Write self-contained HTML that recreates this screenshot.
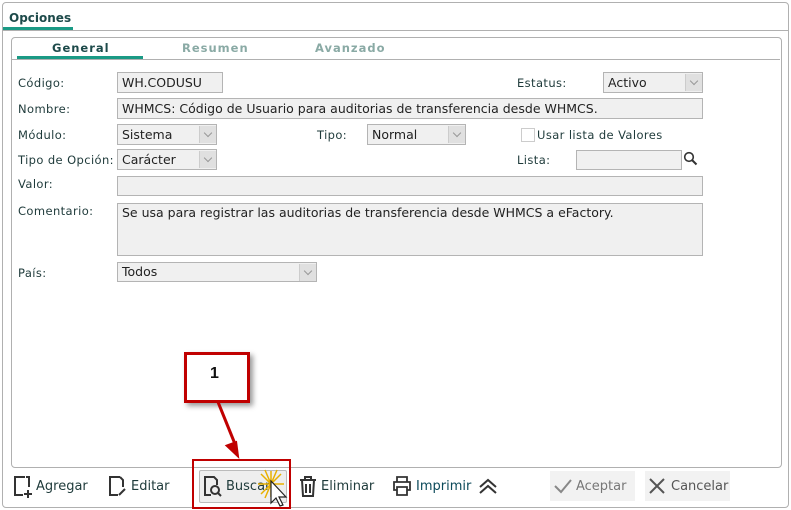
<!DOCTYPE html>
<html><head><meta charset="utf-8"><style>
body{margin:0;width:791px;height:510px;background:#fff;font-family:"DejaVu Sans","Liberation Sans",sans-serif;font-size:11.5px;color:#1e3a3a;position:relative;overflow:hidden}
.a{position:absolute}
.outer{left:2px;top:2px;width:785px;height:504px;border:1px solid #b0b0b0;border-radius:4px}
.inner{left:11px;top:37px;width:769px;height:429px;border:1px solid #b0b0b0;border-radius:4px}
.inp{position:absolute;background:#f0f0f0;border:1px solid #b4b4b4;box-sizing:border-box;font-size:12.5px;color:#222;padding-left:4px;line-height:19px;font-family:"DejaVu Sans","Liberation Sans",sans-serif}
.sel::after{content:"";position:absolute;right:0;top:1px;width:16px;height:17px;background:#e0e0e0;border-left:1px solid #ccc}
.sel::before{content:"";position:absolute;right:5px;top:5px;width:5px;height:5px;border-right:1px solid #999;border-bottom:1px solid #999;transform:rotate(45deg);z-index:2}
.lbl{position:absolute;font-size:11.5px;color:#1e3a3a;letter-spacing:0.4px}
.tb{position:absolute;top:479px;font-size:13px;color:#1e3a3a;font-family:"DejaVu Sans","Liberation Sans",sans-serif}
</style></head><body>
<div class="a outer"></div>
<div class="a" style="left:9px;top:11px;font-weight:bold;font-size:12px;color:#1d4a4a">Opciones</div>
<div class="a" style="left:3px;top:27px;width:70px;height:3px;background:#1a9a85"></div>
<div class="a" style="left:3px;top:30px;width:785px;height:1px;background:#b0b0b0"></div>
<div class="a inner"></div>
<div class="a" style="left:52px;top:41px;font-weight:bold;font-size:11.5px;color:#1d4a4a;letter-spacing:1px">General</div>
<div class="a" style="left:182px;top:41px;font-weight:bold;font-size:11.5px;color:#8aaaa5;letter-spacing:1px">Resumen</div>
<div class="a" style="left:315px;top:41px;font-weight:bold;font-size:11.5px;color:#8aaaa5;letter-spacing:1px">Avanzado</div>
<div class="a" style="left:17px;top:56px;width:126px;height:3px;background:#1a9a85"></div>
<div class="a" style="left:12px;top:59px;width:768px;height:1px;background:#b0b0b0"></div>

<div class="lbl" style="left:18px;top:76px">Código:</div>
<div class="inp" style="left:117px;top:72px;width:106px;height:21px">WH.CODUSU</div>
<div class="lbl" style="left:517px;top:76px">Estatus:</div>
<div class="inp sel" style="left:603px;top:72px;width:100px;height:21px">Activo</div>
<div class="lbl" style="left:18px;top:102px">Nombre:</div>
<div class="inp" style="left:117px;top:98px;width:586px;height:21px">WHMCS: Código de Usuario para auditorias de transferencia desde WHMCS.</div>
<div class="lbl" style="left:18px;top:128px">Módulo:</div>
<div class="inp sel" style="left:117px;top:124px;width:100px;height:21px">Sistema</div>
<div class="lbl" style="left:317px;top:128px">Tipo:</div>
<div class="inp sel" style="left:367px;top:124px;width:99px;height:21px">Normal</div>
<div class="a" style="left:521px;top:128px;width:12px;height:12px;border:1px solid #ccc"></div>
<div class="lbl" style="left:537px;top:128px">Usar lista de Valores</div>
<div class="lbl" style="left:18px;top:153px">Tipo de Opción:</div>
<div class="inp sel" style="left:117px;top:149px;width:100px;height:21px">Carácter</div>
<div class="lbl" style="left:517px;top:153px">Lista:</div>
<div class="inp" style="left:576px;top:150px;width:106px;height:20px"></div>
<svg class="a" style="left:683px;top:151px" width="16" height="16"><circle cx="6" cy="6" r="4.3" fill="none" stroke="#333" stroke-width="1.6"/><path d="M9 9l4.5 4.5" stroke="#333" stroke-width="2"/></svg>
<div class="lbl" style="left:18px;top:177px">Valor:</div>
<div class="inp" style="left:117px;top:176px;width:586px;height:20px"></div>
<div class="lbl" style="left:18px;top:204px">Comentario:</div>
<div class="inp" style="left:117px;top:203px;width:586px;height:53px;line-height:17px">Se usa para registrar las auditorias de transferencia desde WHMCS a eFactory.</div>
<div class="lbl" style="left:18px;top:266px">País:</div>
<div class="inp sel" style="left:117px;top:262px;width:200px;height:20px;line-height:18px">Todos</div>

<!-- toolbar -->
<svg class="a" style="left:13px;top:475px" width="20" height="24"><path d="M12 2H2v18h8" fill="none" stroke="#333" stroke-width="2"/><path d="M13 2h3v10" fill="none" stroke="#333" stroke-width="2"/><path d="M15 15v8M11 19h8" stroke="#333" stroke-width="2"/></svg>
<div class="tb" style="left:36px">Agregar</div>
<svg class="a" style="left:107px;top:475px" width="20" height="24"><path d="M13 2H3v18h8M13 2l3 3v7" fill="none" stroke="#333" stroke-width="2"/><path d="M12 20l6-6" stroke="#333" stroke-width="2"/></svg>
<div class="tb" style="left:131px">Editar</div>
<div class="a" style="left:199px;top:470px;width:86px;height:31px;background:#eee;border:1px solid #bbb;border-radius:2px"></div>
<svg class="a" style="left:202px;top:475px" width="22" height="24"><path d="M9 20H3V2h9l3 3v5" fill="none" stroke="#333" stroke-width="2"/><circle cx="13" cy="15" r="4" fill="none" stroke="#333" stroke-width="2"/><path d="M16 18l3 3" stroke="#333" stroke-width="2"/></svg>
<div class="tb" style="left:226px">Buscar</div>
<svg class="a" style="left:255px;top:465px" width="36" height="44"><g stroke="#e8b000" stroke-width="1.5"><path d="M16 6v26M3 19h26M6 9l20 20M26 9L6 29M10 5l12 28M22 5L10 33"/></g><path d="M16 16v22l5-5 4 8 3-1-4-8h7z" fill="#fff" stroke="#222" stroke-width="1.2"/></svg>
<svg class="a" style="left:298px;top:475px" width="20" height="24"><path d="M2 5h16M7 5V2h6v3M4 5l1 16h10l1-16M8 9v9M12 9v9" fill="none" stroke="#333" stroke-width="2"/></svg>
<div class="tb" style="left:321px">Eliminar</div>
<svg class="a" style="left:392px;top:475px" width="20" height="22"><path d="M5 7V2h10v5M5 15H2V7h16v8h-3M5 12h10v8H5z" fill="none" stroke="#333" stroke-width="1.8"/></svg>
<div class="tb" style="left:416px;color:#0c4a5a">Imprimir</div>
<svg class="a" style="left:478px;top:477px" width="20" height="18"><path d="M2 10l8-7 8 7M2 16l8-7 8 7" fill="none" stroke="#333" stroke-width="2"/></svg>
<div class="a" style="left:550px;top:471px;width:85px;height:30px;background:#f2f2f2"></div>
<svg class="a" style="left:553px;top:477px" width="20" height="18"><path d="M2 9l6 6L18 3" fill="none" stroke="#888" stroke-width="2"/></svg>
<div class="tb" style="left:576px;color:#777">Aceptar</div>
<div class="a" style="left:645px;top:471px;width:85px;height:30px;background:#f2f2f2"></div>
<svg class="a" style="left:648px;top:477px" width="18" height="18"><path d="M2 2l14 14M16 2L2 16" stroke="#555" stroke-width="2"/></svg>
<div class="tb" style="left:671px;color:#555">Cancelar</div>

<!-- callout -->
<div class="a" style="left:184px;top:352px;width:60px;height:45px;border:3px solid #c00000;background:#fff;box-shadow:3px 3px 5px rgba(0,0,0,.4)"></div>
<div class="a" style="left:210px;top:365px;font-family:'Liberation Sans',sans-serif;font-weight:bold;font-size:16px;color:#111">1</div>
<svg class="a" style="left:205px;top:400px" width="45" height="62"><path d="M13 2L30 44" stroke="#c00000" stroke-width="3"/><path d="M22 42l13 0-4 18z" fill="#c00000" transform="rotate(-20 30 50)"/></svg>
<div class="a" style="left:192px;top:459px;width:95px;height:46px;border:2px solid #c00000"></div>
</body></html>
